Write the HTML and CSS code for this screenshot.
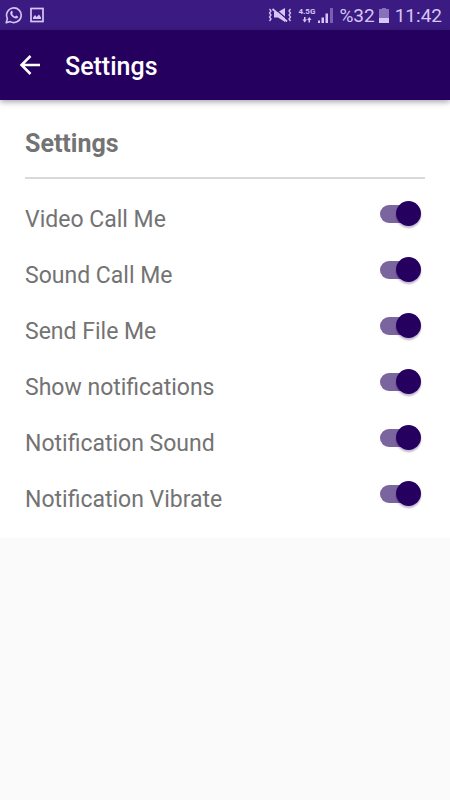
FILE: index.html
```
<!DOCTYPE html>
<html lang="en">
<head>
  <meta charset="UTF-8">
  <title>Settings</title>
  <meta name="viewport" content="width=device-width, initial-scale=1.0">
  <link rel="stylesheet" href="styles.css">
</head>
<body>
  <div class="status-bar">
    <div class="status-left">
      <svg width="18" height="18" viewBox="0 0 18 18" fill="none" stroke="currentColor">
        <path d="M1.2 16.8l1.2-4.2A7.3 7.3 0 1 1 5.3 15.6z" stroke-width="1.6" stroke-linejoin="round"/>
        <path d="M6 5.2c.6-.7 1.1-.5 1.3 0l.6 1.4c.1.4-.7 1-.7 1.3.6 1.2 1.6 2.1 2.9 2.6.4 0 .9-1 1.2-.9l1.6.8c.5.3.2 1.3-.4 1.7-1 .8-2.5.5-4.300-.6C6.600 10.500 5.300 8.800 5.200 7.300c0-.8.3-1.600.8-2.100z" fill="currentColor" stroke="none"/>
      </svg>
      <svg width="14" height="16" viewBox="0 0 14 16" fill="none" stroke="currentColor">
        <rect x="1" y="1.500" width="12" height="13" stroke-width="1.700"/>
        <path d="M3 12V10.500l2-2.500 1.700 2L9 7.500l2 3V12z" fill="currentColor" stroke="none"/>
      </svg>
    </div>
    <div class="status-right">
      <svg class="mute" width="24" height="16" viewBox="0 0 24 16" fill="none" stroke="currentColor">
        <path d="M6 5h4l7-4v14l-7-4.500H6z" fill="currentColor" stroke="none"/>
        <path d="M6 1l14 12" stroke="#3b1b81" stroke-width="1.300"/>
        <path d="M4.500 2l14.500 12.500" stroke-width="1.800"/>
        <path d="M1.500 2l1.500 2-1.500 2L3 8l-1.500 2L3 12l-1.500 2M22.500 2L21 4l1.500 2L21 8l1.500 2-1.500 2 1.500 2" stroke-width="1.300"/>
      </svg>
      <div class="network">
        <span>4.5G</span>
        <svg width="10" height="6" viewBox="0 0 10 6" fill="currentColor">
          <path d="M2 0h1.500v2.500H5L2.700 5.500.500 2.500H2zM6.500 5.500V3H5l2.300-3 2.200 3H8v2.500z"/>
        </svg>
      </div>
      <svg class="signal" width="15" height="15" viewBox="0 0 15 15" fill="currentColor">
        <path d="M0 12.500h2V15H0zM3.500 9.500H6V15H3.500zM7.500 5.500H10V15H7.500z"/>
        <path d="M12 0h3v15h-3z" opacity=".4"/>
      </svg>
      <span>%32</span>
      <svg class="battery" width="10" height="15" viewBox="0 0 10 15" fill="currentColor">
        <path d="M3 0h4v1h3v9H0V1h3z" opacity=".5"/>
        <path d="M0 10h10v5H0z"/>
      </svg>
      <span>11:42</span>
    </div>
  </div>

  <header class="app-bar">
    <button class="back-btn" type="button" aria-label="Back">
      <svg width="22" height="22" viewBox="0 0 22 22" fill="none" stroke="currentColor" stroke-width="2.500">
        <path d="M21 11H3M11.500 2L2.500 11l9 9"/>
      </svg>
    </button>
    <h1>Settings</h1>
  </header>

  <main class="settings">
    <h2>Settings</h2>
    <label class="row"><span>Video Call Me</span><input class="switch" type="checkbox" role="switch" checked></label>
    <label class="row"><span>Sound Call Me</span><input class="switch" type="checkbox" role="switch" checked></label>
    <label class="row"><span>Send File Me</span><input class="switch" type="checkbox" role="switch" checked></label>
    <label class="row"><span>Show notifications</span><input class="switch" type="checkbox" role="switch" checked></label>
    <label class="row"><span>Notification Sound</span><input class="switch" type="checkbox" role="switch" checked></label>
    <label class="row"><span>Notification Vibrate</span><input class="switch" type="checkbox" role="switch" checked></label>
  </main>
</body>
</html>
```
FILE: styles.css
```
* { box-sizing: border-box; }
body { font-family: Roboto, "Liberation Sans", sans-serif; background: #fafafa; color: #737373; margin: 0; }
svg { display: block; flex: none; }

.status-bar {
  display: flex; justify-content: space-between; align-items: center;
  height: 30px; padding: 0 8px 0 5px;
  background: #3b1b81; color: #d6c6f5; font-size: 19px;
}
.status-left, .status-right { display: flex; align-items: center; }
.status-left { gap: 7px; }
.mute { margin-right: 6px; }
.network {
  display: flex; flex-direction: column; align-items: center; gap: 1px;
  font-size: 8px; line-height: 9px; font-weight: 700; margin-right: 3px;
}
.signal { margin-right: 6px; }
.battery { margin: 0 6px 0 4px; }

.app-bar {
  position: relative; display: flex; align-items: center; gap: 24px;
  height: 70px; padding: 0 19px;
  background: #25005e; color: #fff; box-shadow: 0 2px 6px rgba(0, 0, 0, 0.35);
}
.back-btn { background: none; border: none; color: inherit; padding: 0; cursor: pointer; }
h1 { font-size: 25px; line-height: 30px; font-weight: 500; margin: 3px 0 0; }

.settings { background: #fff; padding: 29px 25px 2px; }
h2 {
  font-size: 25px; line-height: 30px; font-weight: 700;
  margin: 0 0 21px; padding-bottom: 18px; border-bottom: 2px solid #d9d9d9;
}
.row {
  display: flex; justify-content: space-between; align-items: flex-start;
  height: 56px; padding-right: 4px; font-size: 23px; line-height: 40px; cursor: pointer;
}
.switch {
  appearance: none; position: relative; width: 41px; height: 28px; margin: 0; cursor: pointer;
}
.switch::before {
  content: ""; position: absolute; left: 0; top: 5px;
  width: 36px; height: 18px; border-radius: 9px; background: #bbb;
}
.switch::after {
  content: ""; position: absolute; left: 0; top: 1px;
  width: 25px; height: 25px; border-radius: 50%; background: #eee;
  box-shadow: 0 2px 2px rgba(37, 0, 94, 0.3);
}
.switch:checked::before { background: #7a659f; }
.switch:checked::after { left: auto; right: 0; background: #25005e; }
```
